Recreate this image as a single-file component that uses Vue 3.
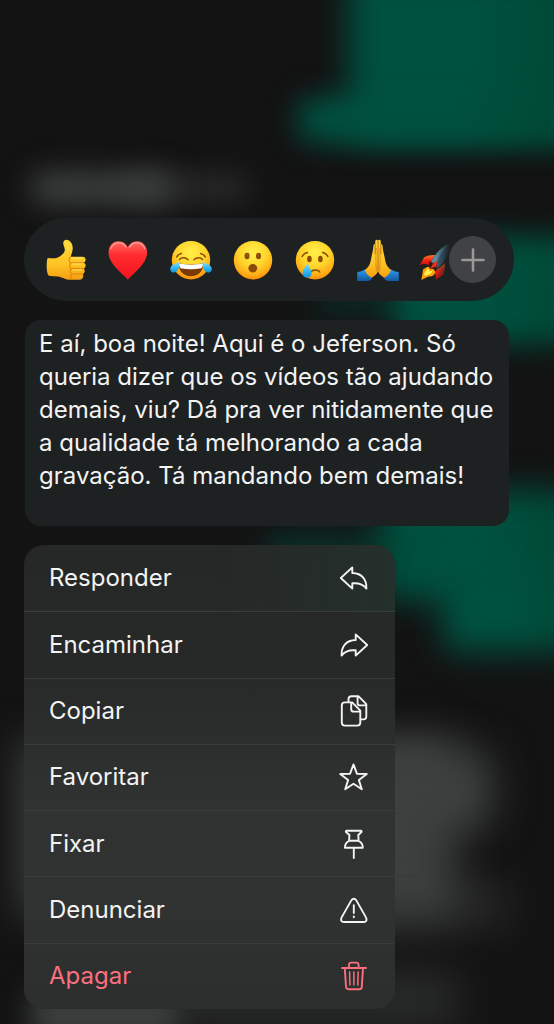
<script setup>
const actions = [
  { label: 'Responder', icon: 'reply' },
  { label: 'Encaminhar', icon: 'forward' },
  { label: 'Copiar', icon: 'copy' },
  { label: 'Favoritar', icon: 'star' },
  { label: 'Fixar', icon: 'pin' },
  { label: 'Denunciar', icon: 'report' },
  { label: 'Apagar', icon: 'trash', danger: true },
]
</script>

<template>
  <main class="screen">
    <div class="backdrop" aria-hidden="true">
      <i class="blob green g1"></i>
      <i class="blob green g2"></i>
      <i class="blob green g3"></i>
      <i class="blob green g4"></i>
      <i class="blob green g5"></i>
      <i class="blob green g6"></i>
      <i class="blob green g7"></i>
      <i class="blob gray s1"></i>
      <i class="blob gray s2"></i>
      <i class="blob gray s3"></i>
      <i class="blob gray s4"></i>
      <i class="blob gray s5"></i>
      <i class="blob gray s6"></i>
      <i class="blob gray s7"></i>
    </div>

    <svg class="defs" aria-hidden="true">
      <defs>
        <radialGradient id="face" cx="0.5" cy="0.3" r="0.72">
          <stop offset="0" stop-color="#fff04a" />
          <stop offset="0.5" stop-color="#ffd52c" />
          <stop offset="0.8" stop-color="#ffae18" />
          <stop offset="1" stop-color="#f98a06" />
        </radialGradient>
        <linearGradient id="tear" x1="0" y1="0" x2="0" y2="1">
          <stop offset="0" stop-color="#8be4ff" />
          <stop offset="0.5" stop-color="#35bdf5" />
          <stop offset="1" stop-color="#168fe0" />
        </linearGradient>
        <linearGradient id="skin" x1="0" y1="0" x2="0" y2="1">
          <stop offset="0" stop-color="#ffd83a" />
          <stop offset="0.6" stop-color="#ffc526" />
          <stop offset="1" stop-color="#f59d12" />
        </linearGradient>
        <linearGradient id="heart" x1="0" y1="0" x2="0" y2="1">
          <stop offset="0" stop-color="#ff6a62" />
          <stop offset="0.35" stop-color="#ff2d2f" />
          <stop offset="1" stop-color="#f3121d" />
        </linearGradient>
        <linearGradient id="sleeve" x1="0" y1="0" x2="0" y2="1">
          <stop offset="0" stop-color="#2f9df0" />
          <stop offset="1" stop-color="#12589f" />
        </linearGradient>
        <linearGradient id="fin" x1="0" y1="0" x2="0" y2="1">
          <stop offset="0" stop-color="#ff7628" />
          <stop offset="0.5" stop-color="#f32313" />
          <stop offset="1" stop-color="#b40d0d" />
        </linearGradient>
        <linearGradient id="fade" x1="0" y1="0" x2="1" y2="0">
          <stop offset="0.4" stop-color="#fff" />
          <stop offset="0.74" stop-color="#000" />
        </linearGradient>
        <mask id="rocketMask"><rect width="42" height="42" fill="url(#fade)" /></mask>
      </defs>
    </svg>

    <section class="reactions" aria-label="Reações">
      <button class="emoji" type="button" aria-label="Curtir">
        <svg viewBox="0 0 42 42">
          <path fill="url(#skin)" d="M2.7 19C7 19.4 10.3 19.8 13.3 18.2C17 16 20 14 19.8 10.5C19.5 7.5 17.9 6 18.3 3.4C18.7 .6 21.5.1 23.6 1.2C26.8 3.1 28.2 7 27.6 10.8C27.2 13.4 26.2 15.4 25.8 17.8H37.3C39.7 17.8 40.8 19.3 40.6 21C40.5 22.6 39.6 23.3 38.8 23.7C40.3 24.4 40.8 25.5 40.6 27C40.4 28.5 39.5 29.3 38.4 29.6C39.5 30.3 39.9 31.4 39.6 32.7C39.3 34 38.5 34.7 37.7 35C38.4 35.9 38.5 37 38 38.2C37.3 40 35.9 40.8 33.8 40.8H25.5C20.5 40.8 16.8 37.7 12.7 37.4L5 37C2.6 36.9 1.7 32.3 1.7 27.5C1.7 23 2 20.2 2.7 19Z" />
          <path fill="none" stroke="#e28608" stroke-width="1.1" stroke-linecap="round" d="M25.5 18C23.5 19 23.5 22.8 26 23.7H38.5M26 23.8C24 25 24.2 28.7 26.3 29.5H38M26.3 29.7C24.5 31 24.8 34 27 35H37.5M27 35.2C25.2 36.4 25.5 39.8 27.5 40.4" />
          <path fill="none" stroke="#fff080" stroke-opacity=".7" stroke-width="1" stroke-linecap="round" d="M27 19.2H37M27.2 25H37M27.5 30.9H36.5M20 3.2C22 4 23.5 7.5 23 11" />
        </svg>
      </button>
      <button class="emoji" type="button" aria-label="Amei">
        <svg viewBox="0 0 42 42">
          <path fill="url(#heart)" d="M20.8 41C18.8 37.2 5.1 28 2.2 18C-.3 9.3 4.5 2.3 11.5 2.3C16.2 2.3 19.3 5.1 20.8 8.3C22.3 5.1 25.4 2.3 30.1 2.3C37.1 2.3 41.9 9.3 39.4 18C36.5 28 22.8 37.2 20.8 41Z" />
          <path fill="none" stroke="#ffb0a5" stroke-opacity=".75" stroke-width="1.4" stroke-linecap="round" d="M3.8 9.5C6.5 3.2 14.7 1.5 19 8M22.6 8C27 1.5 35.1 3.2 37.8 9.5" />
        </svg>
      </button>
      <button class="emoji" type="button" aria-label="Haha">
        <svg viewBox="0 0 42 42">
          <circle cx="21" cy="21.2" r="19.2" fill="url(#face)" />
          <path fill="none" stroke="#8c4a09" stroke-width="1.5" stroke-linecap="round" d="M6.8 18C7.5 16 9.2 14.8 11.4 14.4M35.2 18C34.5 16 32.8 14.8 30.6 14.4M9.5 20.5C11.5 18.2 15.6 18.2 18 20.8M24 20.8C26.4 18.2 30.5 18.2 32.5 20.5" />
          <path fill="#7c3905" d="M8.7 24.3Q21 26.8 33.3 24.3C33.4 32.5 28.5 37.3 21 37.3S8.6 32.5 8.7 24.3Z" />
          <path fill="#fff" d="M8.9 24.5Q21 26.8 33.1 24.5Q33.1 28 31.5 29.3Q21 31.2 10.5 29.3Q8.9 28 8.9 24.5Z" />
          <path fill="url(#tear)" d="M9.3 22.8C9.8 26.9 8.4 32.9 4.2 33.6C1 34.1-.7 30.6.8 28C2.3 25.4 6.4 25 9.3 22.8ZM32.7 22.8C32.2 26.9 33.6 32.9 37.8 33.6C41 34.1 42.7 30.6 41.2 28C39.7 25.4 35.6 25 32.7 22.8Z" />
        </svg>
      </button>
      <button class="emoji" type="button" aria-label="Uau">
        <svg viewBox="0 0 42 42">
          <circle cx="21" cy="21.2" r="19.2" fill="url(#face)" />
          <g fill="#8a4a08">
            <ellipse cx="15" cy="17" rx="2.5" ry="3.2" />
            <ellipse cx="26.5" cy="17" rx="2.5" ry="3.2" />
            <ellipse cx="20.8" cy="29.3" rx="4.4" ry="4.2" />
          </g>
          <path fill="none" stroke="#b27112" stroke-width="1" d="M14 16.2Q15 14.9 16 16.2M25.5 16.2Q26.5 14.9 27.5 16.2" />
        </svg>
      </button>
      <button class="emoji" type="button" aria-label="Triste">
        <svg viewBox="0 0 42 42">
          <circle cx="21" cy="21.2" r="19.2" fill="url(#face)" />
          <g fill="#8a4a08">
            <ellipse cx="15.4" cy="20" rx="2.3" ry="3.2" />
            <ellipse cx="26.4" cy="20" rx="2.3" ry="3.2" />
          </g>
          <path fill="none" stroke="#8a4a08" stroke-width="1.5" stroke-linecap="round" d="M8.2 17.5C9.2 15.3 11 13.8 13.4 13.4M33.8 17.5C32.8 15.3 31 13.8 28.6 13.4M17 33C18.5 30.2 24.2 30.2 25.8 33" />
          <path fill="url(#tear)" d="M13.5 24C14.5 27.6 17.5 30.3 17.5 34.2C17.5 37 15.6 38.8 13.1 38.8S8.6 37 8.6 34.2C8.6 30.3 12.4 27.6 13.5 24Z" />
        </svg>
      </button>
      <button class="emoji" type="button" aria-label="Obrigado">
        <svg viewBox="0 0 42 42">
          <path fill="url(#sleeve)" d="M.2 33.2Q4.8 33 8.4 30.3L16 37.5Q13.6 42 10.5 42H.2ZM41.8 33.2Q37.2 33 33.6 30.3L26 37.5Q28.4 42 31.5 42H41.8Z" />
          <path fill="url(#skin)" d="M20.9 1.6C19.6.2 18.5.6 18.3 2.4L18 5C16.6 5.2 16.4 6.6 16.3 8.2C16.1 12 14.6 16 14 20.5C13.3 25.5 11 28.4 8 31C9.2 34.7 12 37.8 15 38.5C18.2 36.6 20.6 35 21 31.6C21.4 35 23.8 36.6 27 38.5C30 37.8 32.8 34.7 34 31C31 28.4 28.7 25.5 28 20.5C27.4 16 25.9 12 25.7 8.2C25.6 6.6 25.4 5.2 24 5L23.7 2.4C23.5.6 22.2.2 20.9 1.6Z" />
          <path fill="none" stroke="#a9560b" stroke-width="1" stroke-opacity=".75" d="M21 1.5V31M18.1 4V15M23.9 4V15" />
          <path fill="none" stroke="#d77a10" stroke-width="1.2" stroke-opacity=".6" d="M19.2 9C18.7 16 18.7 24 19.5 32M22.8 9C23.3 16 23.3 24 22.5 32" />
        </svg>
      </button>
      <button class="emoji" type="button" aria-label="Foguete">
        <svg viewBox="0 0 42 42">
          <g mask="url(#rocketMask)">
            <path fill="url(#fin)" d="M.3 26.4Q3.2 22.5 5 18.2Q11 15.4 17.5 16.3L12 27Q6 23.5.3 26.4Z" />
            <path fill="url(#fin)" d="M17 40.5Q15.8 35 17 31.5L26 24Q26.5 31.5 24 36Q21 38 17 40.5Z" />
            <path fill="#35667f" d="M10 29C13 17.5 20.5 9 31 3.7C30.5 15.5 25 24.8 15.2 32Z" />
            <path fill="#5d8ea3" d="M12 24C16 14.5 22.5 8.2 31 3.7C26.2 10 21 15 17.5 23Z" />
            <path fill="#ff9e0b" d="M4 30.5Q8 27 12.5 27.7L16.8 33Q14 38.5 9.5 37.4L2.3 41Q3 37 3.3 35.5Z" />
            <path fill="#fff04a" d="M5 34.5L9 29L11 32.5L14 31.2L11.5 35L6 37Z" />
            <path fill="#3c1518" d="M10 22L18 26.3L17 32.5L14.7 30L10.4 29.5Z" />
            <path fill="#eb3215" d="M14.2 24.5L19.5 20.5L17.2 27.8L11.4 29.2Z" />
          </g>
        </svg>
      </button>
      <button class="more" type="button" aria-label="Mais reações">
        <svg viewBox="0 0 24 24"><path d="M12 1.5V22.5M1.5 12H22.5" /></svg>
      </button>
    </section>

    <article class="message">
      <p>E aí, boa noite! Aqui é o Jeferson. Só queria dizer que os vídeos tão ajudando demais, viu? Dá pra ver nitidamente que a qualidade tá melhorando a cada gravação. Tá mandando bem demais!</p>
    </article>

    <nav class="menu" aria-label="Ações da mensagem">
      <button v-for="a in actions" :key="a.icon" class="item" :class="{ danger: a.danger }" type="button">
        <span>{{ a.label }}</span>
        <svg class="icon" viewBox="0 0 32 32" aria-hidden="true">
          <path v-if="a.icon === 'reply'" d="M14.3 5.4 2.8 16 14.3 26.6V21.3C19.8 20.8 24.6 21.3 28.4 26.6 28.8 17.5 24.2 11.4 14.3 11Z" />
          <path v-else-if="a.icon === 'forward'" d="M17.7 5.4 29.2 16 17.7 26.6V21.3C12.2 20.8 7.4 21.3 3.6 26.6 3.2 17.5 7.8 11.4 17.7 11Z" />
          <g v-else-if="a.icon === 'copy'">
            <path d="M6.8 7.4H14.2L22.3 15.6V27.6Q22.3 30.6 19.3 30.6H6.8Q3.8 30.6 3.8 27.6V10.4Q3.8 7.4 6.8 7.4ZM13.2 7.6V14.2Q13.2 16.6 15.6 16.6H22" />
            <path d="M10.5 7V4Q10.5 1.2 13.4 1.2H20.4L28.3 9.2V21.6Q28.3 24.4 25.4 24.4H22.6M19.6 1.6V8.2Q19.6 10.4 21.8 10.4H28" />
          </g>
          <path v-else-if="a.icon === 'star'" d="M15.5 3.4 18.9 12.7 28.8 13 20.9 19.1 23.8 28.3 15.5 22.8 7.2 28.3 10.1 19.1 2.2 13 12.1 12.7Z" />
          <path v-else-if="a.icon === 'pin'" d="M8.5 2.8H23C23.6 2.8 23.8 3.5 23.5 4L20.3 7 20.6 12.8C23.4 14.2 24.9 16.6 24.8 19.8H6.9C6.8 16.6 8.3 14.2 11.1 12.8L11.4 7 8 4C7.7 3.5 7.9 2.8 8.5 2.8ZM11.4 12.8H20.3M15.8 20.2V30" />
          <g v-else-if="a.icon === 'report'">
            <path d="M13.3 6.4Q15.8 3 18.3 6.4L28.1 23.6Q29.6 28 25.6 28H6Q2 28 3.5 23.6Z" />
            <path d="M15.8 11.2V19M15.8 22.4V23.2" />
          </g>
          <g v-else>
            <path d="M4 8H28M11 7.8V5Q11 2.6 13.4 2.6H18.2Q20.6 2.6 20.6 5V7.8M6.8 8.4 8 26.8Q8.2 29.2 10.6 29.2H21.2Q23.6 29.2 23.8 26.8L25 8.4" />
            <path class="thin" d="M11.6 12 12 25M15.9 12V25M20.2 12 19.8 25" />
          </g>
        </svg>
      </button>
    </nav>
  </main>
</template>

<style>
body {
  background: #131313;
}
</style>

<style scoped>
.screen {
  position: relative;
  box-sizing: border-box;
  min-height: 100vh;
  padding: 218px 40px 15px 24px;
  overflow: hidden;
  background: #131313;
  font-family: Inter, "Liberation Sans", sans-serif;
  color: #f3f3f3;
}

.backdrop {
  position: absolute;
  inset: 0;
}

.defs {
  position: absolute;
  width: 0;
  height: 0;
}

.blob {
  position: absolute;
  border-radius: 16px;
  filter: blur(14px);
}

.green { background: linear-gradient(90deg, #005140 55%, #004733); }
.gray { background: #3e4040; }

.g1 { top: -30px; right: -30px; width: 236px; height: 170px; filter: blur(16px); }
.g2 { top: 97px; right: -30px; width: 286px; height: 46px; }
.g3 { top: 236px; right: -30px; width: 190px; height: 108px; }
.g4 { top: 290px; right: 20px; width: 220px; height: 24px; opacity: .4; }
.g5 { top: 490px; right: -30px; width: 204px; height: 110px; filter: blur(16px); }
.g6 { top: 560px; right: -30px; width: 142px; height: 92px; filter: blur(16px); }
.g7 { top: 534px; right: 140px; width: 150px; height: 30px; opacity: .5; }
.s1 { top: 172px; left: 30px; width: 144px; height: 32px; }
.s2 { top: 174px; left: 120px; width: 130px; height: 28px; opacity: .5; }
.s3 { top: 738px; left: 20px; width: 436px; height: 180px; filter: blur(20px); }
.s4 { top: 750px; left: 340px; width: 152px; height: 80px; filter: blur(20px); }
.s5 { top: 880px; left: 300px; width: 210px; height: 50px; opacity: .45; filter: blur(20px); }
.s6 { top: 990px; left: 30px; width: 150px; height: 50px; }
.s7 { top: 970px; left: 170px; width: 290px; height: 60px; opacity: .5; filter: blur(20px); }

button {
  margin: 0;
  border: 0;
  background: none;
  font: inherit;
  color: inherit;
  cursor: pointer;
}

.reactions {
  position: relative;
  display: flex;
  align-items: center;
  justify-content: space-between;
  height: 83px;
  box-sizing: border-box;
  padding: 0 53px 0 21px;
  border-radius: 42px;
  background: #1d2121;
}

.emoji {
  width: 42px;
  height: 42px;
  padding: 0;
}

.emoji svg {
  display: block;
  width: 100%;
  height: 100%;
}

.more {
  position: absolute;
  top: 18px;
  right: 18px;
  display: grid;
  place-items: center;
  width: 47px;
  height: 47px;
  padding: 0;
  border-radius: 50%;
  background: #404243;
}

.more svg {
  width: 24px;
  height: 24px;
  fill: none;
  stroke: #9a9899;
  stroke-width: 2.6;
  stroke-linecap: round;
}

.message {
  position: relative;
  margin: 19px 5px 0 1px;
  padding: 7px 8px 34px 14px;
  border-radius: 16px;
  background: #1d2121;
}

.message p {
  margin: 0;
  font-size: 24px;
  line-height: 33px;
}

.menu {
  position: relative;
  display: grid;
  grid-auto-rows: 1fr;
  max-width: 371px;
  min-height: 464px;
  margin-top: 19px;
  overflow: hidden;
  border-radius: 20px;
  background: linear-gradient(180deg, #262727 0%, #272828 25%, #303131 55%, #313232 75%, #2c2d2d 100%);
}

.item {
  display: flex;
  align-items: center;
  justify-content: space-between;
  padding: 0 25px;
  font-size: 24px;
  line-height: 32px;
}

.item + .item {
  border-top: 1px solid #3a3b3b;
}

.item:first-child {
  background: linear-gradient(90deg, transparent 50%, #24302b);
}

.icon {
  width: 32px;
  height: 32px;
  fill: none;
  stroke: currentColor;
  stroke-width: 1.9;
  stroke-linejoin: round;
  stroke-linecap: round;
}

.thin {
  stroke-width: 1.5;
}

.danger {
  color: #fb6f7f;
}
</style>
